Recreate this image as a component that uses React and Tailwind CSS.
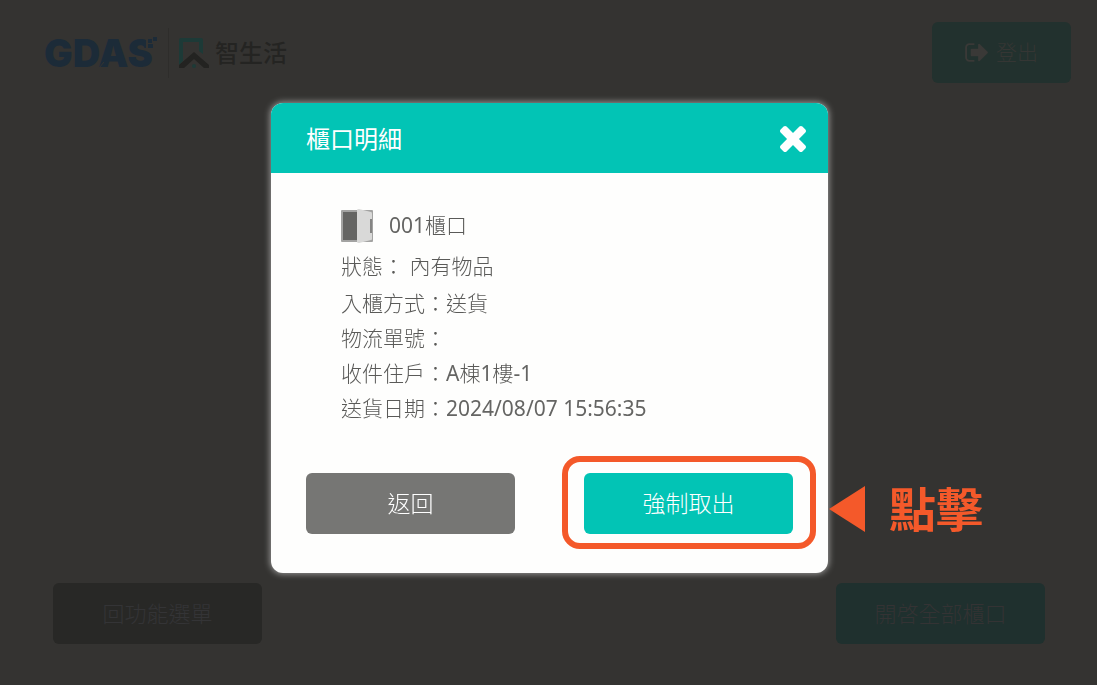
import React, { useState } from 'react';

const DETAILS = [
  { label: '入櫃方式', value: '送貨' },
  { label: '物流單號', value: '' },
  { label: '收件住戶', value: 'A棟1樓-1' },
  { label: '送貨日期', value: '2024/08/07 15:56:35' },
];

// latin runs are set one weight heavier so they sit evenly beside the CJK text
function Mixed({ text }) {
  return text.split(/([\x20-\x7e]+)/).map((part, i) => (
    i % 2 ? <span key={i} className="font-normal text-[#656563]">{part}</span> : part
  ));
}

function GdasLogo() {
  return (
    <svg viewBox="0 -8 118 48" className="w-[118px] h-12" role="img" aria-label="GDAS">
      <text x="-1" y="30" fill="#1c2b38" fontSize="38" fontWeight="900" fontFamily="Inter, 'Liberation Sans', sans-serif">GDAS</text>
      <path d="M29 1v30M54 31l5-6M82 22l7 9" stroke="#343331" strokeWidth="1" fill="none" />
      <path d="M101 0h12v11h-12z" fill="#343331" />
      <path d="M103 2h4v4h-4zM108 0h4v4h-4zM103 7h5v4h-5z" fill="#1c2b38" />
    </svg>
  );
}

function SmartLifeMark() {
  return (
    <svg viewBox="0 0 30 30" className="w-[30px] h-[30px]" aria-hidden="true">
      <path d="M0 27V2q0-2 2-2h20q2 0 2 2v14l-4-3V4H4v19z" fill="#1d3a37" />
      <path d="M0 30v-3l15-13 15 13v3h-5l-10-9-10 9z" fill="#232321" />
      <circle cx="15" cy="28" r="2" fill="#1d3a37" />
    </svg>
  );
}

function SignOutIcon() {
  return (
    <svg viewBox="64 240 1568 1312" className="w-[23px] h-[19px]" fill="currentColor" aria-hidden="true">
      <path d="M704 1440q0 4 1 20t.5 26.5-3 23.5-10 19.5-20.5 6.5h-320q-119 0-203.5-84.5t-84.5-203.5v-704q0-119 84.5-203.5t203.5-84.5h320q13 0 22.5 9.5t9.5 22.5q0 4 1 20t.5 26.5-3 23.5-10 19.5-20.5 6.5h-320q-66 0-113 47t-47 113v704q0 66 47 113t113 47h312l11.5 1 11.5 3 8 5.5 7 9 2 13.5zm928-544q0 26-19 45l-544 544q-19 19-45 19t-45-19-19-45v-288h-448q-26 0-45-19t-19-45v-384q0-26 19-45t45-19h448v-288q0-26 19-45t45-19 45 19l544 544q19 19 19 45z" />
    </svg>
  );
}

function CloseIcon() {
  return (
    <svg viewBox="302 302 1188 1188" className="w-[26px] h-[26px]" fill="currentColor" aria-hidden="true">
      <path d="M1490 1258q0 40-28 68l-136 136q-28 28-68 28t-68-28l-294-294-294 294q-28 28-68 28t-68-28l-136-136q-28-28-28-68t28-68l294-294-294-294q-28-28-28-68t28-68l136-136q28-28 68-28t68 28l294 294 294-294q28-28 68-28t68 28l136 136q28 28 28 68t-28 68l-294 294 294 294q28 28 28 68z" />
    </svg>
  );
}

function LockerIcon() {
  return (
    <svg viewBox="0 0 33 35" className="w-[33px] h-[35px]" aria-hidden="true">
      <rect x="0" y="1" width="32" height="32" rx="1" fill="#a3a3a2" />
      <rect x="2" y="3" width="16" height="28" fill="#656563" />
      <path d="M16 1q0-1 2-1l12 3q1 0 1 2v25q0 1-1 1l-12 3q-2 0-2-1z" fill="#d9d9d8" />
      <rect x="29" y="10" width="2" height="14" fill="#858584" />
    </svg>
  );
}

function LockerDialog({ onClose }) {
  return (
    <div className="fixed inset-0 z-50 flex items-center justify-center pb-[9px] pl-0.5">
      <div role="dialog" aria-modal="true" aria-labelledby="dialog-title" className="w-full max-w-[557px] rounded-xl bg-[#fefefd] shadow-[0_0_6px_1px_rgba(255,255,255,0.5)]">
        <div className="flex h-[70px] items-center justify-between rounded-t-xl bg-[#02c4b5] pt-0.5 pl-[35px] pr-[22px] text-white">
          <h2 id="dialog-title" className="text-2xl font-normal">櫃口明細</h2>
          <button type="button" aria-label="關閉" onClick={onClose}>
            <CloseIcon />
          </button>
        </div>

        <div className="px-[70px] pt-[33px] text-[21px] text-[#5a5a58]">
          <div className="flex h-10 items-center gap-[15px]">
            <LockerIcon />
            <p><Mixed text="001櫃口" /></p>
          </div>
          <p className="leading-10">狀態： 內有物品</p>
          {DETAILS.map(d => (
            <p key={d.label} className="leading-[35px]">{d.label}：<Mixed text={d.value} /></p>
          ))}
        </div>

        <div className="flex justify-between px-[35px] pt-[47px] pb-[39px] text-[23px] text-white">
          <button type="button" onClick={onClose} className="h-[61px] w-[209px] rounded-md bg-[#767674]">返回</button>
          <div className="relative">
            <button type="button" className="h-[61px] w-[209px] rounded-md bg-[#02c4b5]">強制取出</button>
            {/* click hint around the action */}
            <div className="pointer-events-none absolute -left-[22px] -right-[23px] -top-[17px] -bottom-[15px] rounded-[18px] border-6 border-[#f4592a]" />
            <div className="pointer-events-none absolute left-full top-0 ml-9 flex h-[72px] items-center gap-6 whitespace-nowrap text-[#f4592a]">
              <svg viewBox="0 0 36 46" className="h-[46px] w-9" aria-hidden="true">
                <path d="M36 0v46L0 23z" fill="currentColor" />
              </svg>
              <span className="text-[47px] font-bold leading-none">點擊</span>
            </div>
          </div>
        </div>
      </div>
    </div>
  );
}

export default function App() {
  const [open, setOpen] = useState(true);

  return (
    <div className="flex min-h-screen flex-col justify-between bg-[#343331] font-['Noto_Sans','Noto_Sans_CJK_TC',sans-serif] font-light">
      <header className="flex items-start justify-between pt-[22px] pl-[45px] pr-[26px]">
        <div className="flex h-[61px] items-center">
          <GdasLogo />
          <div className="ml-[5px] h-[50px] w-px bg-[#2e2d2b]" />
          <div className="ml-[10px] flex items-center gap-[6px]">
            <SmartLifeMark />
            <span className="text-2xl font-medium text-[#242422]">智生活</span>
          </div>
        </div>
        <button type="button" className="flex h-[61px] w-[139px] items-center justify-center gap-2 rounded-md bg-[#22312e] text-[21px] text-[#3a3937]">
          <SignOutIcon />
          <span className="text-[#353634]">登出</span>
        </button>
      </header>

      <footer className="flex justify-between pl-[53px] pr-[52px] pb-[41px] text-[22px]">
        <button type="button" onClick={() => setOpen(true)} className="h-[61px] w-[209px] rounded-md bg-[#282826] text-[#343436]">回功能選單</button>
        <button type="button" className="h-[61px] w-[209px] rounded-md bg-[#1f302e] text-[#343334]">開啓全部櫃口</button>
      </footer>

      {open && <LockerDialog onClose={() => setOpen(false)} />}
    </div>
  );
}
